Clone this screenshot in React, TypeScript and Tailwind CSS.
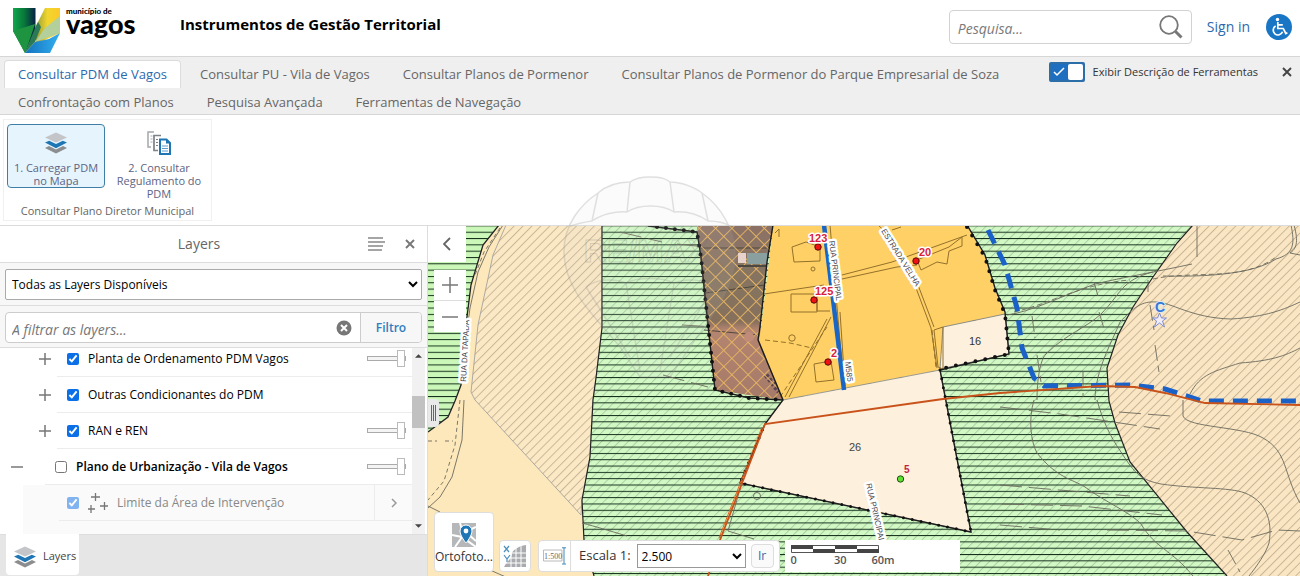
import { useState } from 'react';
import type { ReactNode } from 'react';

const tabs = [
  'Consultar PDM de Vagos',
  'Consultar PU - Vila de Vagos',
  'Consultar Planos de Pormenor',
  'Consultar Planos de Pormenor do Parque Empresarial de Soza',
  'Confrontação com Planos',
  'Pesquisa Avançada',
  'Ferramentas de Navegação',
];

const groups = [
  { label: 'Planta de Ordenamento PDM Vagos', slider: true },
  { label: 'Outras Condicionantes do PDM', slider: false },
  { label: 'RAN e REN', slider: true },
];

const StackIcon = ({ className }: { className: string }) => (
  <svg viewBox="0 0 24 22" className={className} aria-hidden="true">
    <path d="M1 16 5 14l7 3.4L19 14l4 2-11 5.6z" fill="#8b8d8f" />
    <path d="M1 10.600 5.200 8.800 12 12l6.800-3.200 4.200 1.800-11 5.600z" fill="#1f76b4" />
    <path d="M12 .4 23 5.400l-11 5-11-5z" fill="#c3c5c8" />
  </svg>
);

const DocsIcon = () => (
  <svg viewBox="0 0 24 24" className="h-6 w-6" aria-hidden="true" fill="none">
    <path d="M7 1H1v15h3" stroke="#a4a8ac" strokeWidth="1.500" />
    <path d="M3.500 5h2M3.500 8h2M3.500 11h2" stroke="#a4a8ac" strokeWidth="1" />
    <path d="M14 4.500H7v15h4" stroke="#7d8286" strokeWidth="1.700" />
    <path d="M9 8.500h2M9 11.500h2M9 14.500h2" stroke="#7d8286" strokeWidth="1" />
    <path d="M13 8.500h6.500l3.500 3.500v11H13z" fill="#fff" stroke="#1f76b4" strokeWidth="2" />
    <path d="M19 8v4.500h4.500z" fill="#1f76b4" />
    <path d="M15 15h6M15 17.500h6M15 20h6" stroke="#5b9fd0" strokeWidth="1.200" />
  </svg>
);

const Cross = ({ className }: { className: string }) => (
  <svg viewBox="0 0 10 10" className={className} aria-hidden="true">
    <path d="M1 1l8 8M9 1L1 9" stroke="currentColor" strokeWidth="1.900" />
  </svg>
);

const Header = () => (
  <header className="flex h-14 items-start bg-white">
    <a href="#inicio" className="flex w-[168px] gap-[6px] pt-[7px] pl-3" aria-label="Município de Vagos">
      <svg viewBox="0 0 48 46" className="h-[46px] w-12" aria-hidden="true">
        <defs>
          <linearGradient id="lg" x1="0" x2="1" y1="0" y2="0">
            <stop offset="0" stopColor="#12a84b" />
            <stop offset=".5" stopColor="#08773a" />
            <stop offset="1" stopColor="#082144" />
          </linearGradient>
          <linearGradient id="ly" x1="0" x2="1" y1="0" y2="0">
            <stop offset="0" stopColor="#8f9a3c" />
            <stop offset=".5" stopColor="#f2d62f" />
            <stop offset="1" stopColor="#fbc928" />
          </linearGradient>
          <linearGradient id="lb" x1="0" x2="1" y1="0" y2="0">
            <stop offset="0" stopColor="#1173bd" />
            <stop offset="1" stopColor="#35aef0" />
          </linearGradient>
        </defs>
        <path d="M1 1h22.500v22L13 46 1 24z" fill="url(#lg)" />
        <path d="M1 24 23 17 13 46z" fill="#1f9440" />
        <path d="M33 1h15v25L24 37l-1-16z" fill="url(#ly)" />
        <path d="M48 9v17l-25 9 10-14z" fill="#b3cf9c" />
        <path d="M48 26 38 46H13l10-11 14-3z" fill="url(#lb)" />
        <path d="M23.500 20 13 46l10-11 6-15-3-5z" fill="#2b7a55" />
      </svg>
      <span className="flex flex-col font-['Lato',sans-serif] text-black">
        <span className="text-[8px] leading-[8px] font-black">município de</span>
        <span className="text-[27px] leading-[17px] font-black">vagos</span>
      </span>
    </a>
    <h1 className="pt-3 pl-3 text-[15px] leading-6 font-bold text-black">Instrumentos de Gestão Territorial</h1>
    <div className="ml-auto flex items-center pt-[10px] pr-2">
      <div className="flex h-[34px] w-[243px] items-center rounded-sm border border-[#d2d2d2] px-2">
        <input
          type="text"
          aria-label="Pesquisa"
          placeholder="Pesquisa..."
          className="min-w-0 flex-1 bg-transparent pt-1 text-sm italic outline-none placeholder:text-[#7a7a7a]"
        />
        <button type="button" aria-label="Pesquisar">
          <svg viewBox="0 0 24 24" className="h-6 w-6" fill="none" aria-hidden="true">
            <circle cx="10" cy="10" r="8.800" stroke="#777" strokeWidth="1.800" />
            <path d="m16.500 16.500 6 6" stroke="#777" strokeWidth="3" />
          </svg>
        </button>
      </div>
      <a href="#signin" className="ml-[15px] text-sm text-[#2c69ad]">
        Sign in
      </a>
      <button type="button" aria-label="Acessibilidade" className="ml-4">
        <svg viewBox="0 0 26 26" className="h-[26px] w-[26px]" fill="none" aria-hidden="true">
          <circle cx="13" cy="13" r="13" fill="#1976c5" />
          <circle cx="11.500" cy="5.500" r="1.700" fill="#fff" />
          <path d="M11.800 8v6.500h5.500l2.500 5 1.600-.8M12 10.800h4.800" stroke="#fff" strokeWidth="1.700" />
          <path d="M9.600 12a4.800 4.800 0 1 0 6.900 5.800" stroke="#fff" strokeWidth="1.700" />
        </svg>
      </button>
    </div>
  </header>
);

const TabBar = () => {
  const [active, setActive] = useState(0);
  return (
    <div className="flex h-[59px] items-start border-y border-[#d6d6d6] bg-[#efefef] pt-[3px]">
      <nav className="flex max-w-[1030px] flex-wrap pl-1">
        {tabs.map((tab, i) => (
          <button
            key={tab}
            type="button"
            onClick={() => setActive(i)}
            className={
              i === active
                ? 'mr-[5px] h-7 rounded-t-sm border border-b-0 border-[#dcdcdc] bg-white px-[13px] text-[13px] text-[#2c69ad]'
                : 'mr-[5px] h-7 border border-b-0 border-transparent px-[13px] text-[13px] text-[#666]'
            }
          >
            {tab}
          </button>
        ))}
      </nav>
      <label className="mt-[2px] ml-auto flex items-center text-[11px] text-[#333]">
        <input type="checkbox" defaultChecked className="peer sr-only" />
        <span className="mr-2 flex h-5 w-9 items-center justify-between rounded-xs border-2 border-[#2c6ea8] bg-[#1e6fbf]">
          <svg viewBox="0 0 12 10" className="ml-[2px] h-[10px] w-3" fill="none" aria-hidden="true">
            <path d="m1 5 3 3 7-7" stroke="#fff" strokeWidth="1.500" />
          </svg>
          <span className="h-4 w-[15px] rounded-xs bg-white" />
        </span>
        Exibir Descrição de Ferramentas
      </label>
      <button type="button" aria-label="Fechar" className="mt-[7px] mr-2 ml-6 text-[#444]">
        <Cross className="h-[10px] w-[10px]" />
      </button>
    </div>
  );
};

const Toolbar = () => (
  <div className="h-[111px] border-b border-[#dcdcdc] bg-white px-[3px] pt-1">
    <section className="flex h-[102px] w-[209px] flex-col border border-[#f0f0f0] text-[11px] leading-[13px] text-[#5c6484]">
      <div className="flex gap-2 pt-1 pl-[3px]">
        <button
          type="button"
          className="flex h-16 w-[98px] flex-col items-center rounded-sm border border-[#3f7fa5] bg-[#e6f4fd] pt-[6px]"
        >
          <StackIcon className="mb-[6px] h-6 w-6" />
          <span>1. Carregar PDM</span>
          <span>no Mapa</span>
        </button>
        <button type="button" className="flex w-[92px] flex-col items-center pt-[7px]">
          <span className="mb-[6px]">
            <DocsIcon />
          </span>
          <span>2. Consultar</span>
          <span>Regulamento do</span>
          <span>PDM</span>
        </button>
      </div>
      <h2 className="mt-1 text-center text-[#666]">Consultar Plano Diretor Municipal</h2>
    </section>
  </div>
);

const Opacity = ({ label }: { label: string }) => (
  <input
    type="range"
    defaultValue={100}
    aria-label={`Transparência ${label}`}
    className="mr-[6px] ml-auto w-[39px] appearance-none bg-transparent [&::-webkit-slider-runnable-track]:h-[5px] [&::-webkit-slider-runnable-track]:border [&::-webkit-slider-runnable-track]:border-[#aaa] [&::-webkit-slider-runnable-track]:bg-[#f4f4f4] [&::-webkit-slider-thumb]:-mt-[7px] [&::-webkit-slider-thumb]:h-[17px] [&::-webkit-slider-thumb]:w-2 [&::-webkit-slider-thumb]:appearance-none [&::-webkit-slider-thumb]:border [&::-webkit-slider-thumb]:border-[#bbb] [&::-webkit-slider-thumb]:bg-white"
  />
);

const Expander = ({ open }: { open: boolean }) => (
  <svg viewBox="0 0 12 12" className="h-3 w-3" aria-hidden="true">
    <path d={open ? 'M0 6h12' : 'M0 6h12M6 0v12'} stroke="#777" strokeWidth="1.500" />
  </svg>
);

const LayerList = () => (
  <div className="flex min-h-0 flex-1 bg-white">
    <ul className="min-w-0 flex-1 overflow-hidden text-xs text-black">
      {groups.map((g, i) => (
        <li key={g.label} className={i === 0 ? '-mt-[7px] flex h-9' : 'flex h-9'}>
          <button type="button" aria-label={`Expandir ${g.label}`} className="flex w-[57px] items-center justify-end pr-[6px]">
            <Expander open={false} />
          </button>
          <div className="flex flex-1 items-center border-b border-[#ececec]">
            <label className="flex items-center gap-[9px] pl-[10px]">
              <input type="checkbox" defaultChecked className="h-3 w-3 accent-[#0b6fe8]" />
              {g.label}
            </label>
            {g.slider && <Opacity label={g.label} />}
          </div>
        </li>
      ))}
      <li className="flex h-9">
        <button type="button" aria-label="Recolher" className="flex w-[45px] items-center pl-[11px]">
          <Expander open />
        </button>
        <div className="flex flex-1 items-center border-b border-[#ececec]">
          <label className="flex items-center gap-[9px] pl-[10px] font-semibold">
            <input type="checkbox" className="h-3 w-3" />
            Plano de Urbanização - Vila de Vagos
          </label>
          <Opacity label="Plano de Urbanização" />
        </div>
      </li>
      <li className="ml-[23px] flex h-9 bg-[#fafafa] pl-9 text-[#888]">
        <div className="flex flex-1 items-center border-b border-[#ececec]">
          <label className="flex items-center gap-[9px] pl-2">
            <input type="checkbox" defaultChecked className="h-3 w-3 opacity-50 accent-[#0b6fe8]" />
            <svg viewBox="0 0 20 20" className="h-5 w-5" fill="none" stroke="#777" strokeWidth="1.300" aria-hidden="true">
              <path d="M3 4h9M7.500 0v8M12 13h8M16.500 9v8M0 16h7M3 12v8" />
            </svg>
            Limite da Área de Intervenção
          </label>
        </div>
        <button type="button" aria-label="Detalhes" className="flex w-[38px] items-center justify-center border-b border-l border-[#ececec]">
          <svg viewBox="0 0 6 10" className="h-[10px] w-[6px]" fill="none" aria-hidden="true">
            <path d="m1 1 4 4-4 4" stroke="#999" strokeWidth="1.500" />
          </svg>
        </button>
      </li>
      <li className="ml-[23px] flex h-9 bg-[#fafafa]" />
    </ul>
    <div className="mr-[2px] flex w-[13px] flex-col items-center justify-between bg-[#f1f1f1] py-[6px]" aria-hidden="true">
      <svg viewBox="0 0 8 4" className="h-1 w-[7px]">
        <path d="M0 4h8L4 0z" fill="#444" />
      </svg>
      <span className="-mt-[58px] h-8 w-full bg-[#c1c1c1]" />
      <svg viewBox="0 0 8 4" className="h-1 w-[7px]">
        <path d="M0 0h8L4 4z" fill="#444" />
      </svg>
    </div>
  </div>
);

const LayerPanel = () => (
  <aside className="flex h-full w-[428px] shrink-0 flex-col border-r border-[#ddd] bg-[#f7f7f7]">
    <div className="flex h-9 items-center bg-white">
      <h2 className="flex-1 pl-[30px] text-center text-sm text-[#666]">
        <span className="pr-[60px]">Layers</span>
      </h2>
      <button type="button" aria-label="Menu" className="mr-5 -ml-[60px] text-[#888]">
        <svg viewBox="0 0 17 14" className="h-[14px] w-[17px]" aria-hidden="true">
          <path d="M0 1h15M0 5h17M0 9h15M0 13h14" stroke="currentColor" strokeWidth="1.500" />
        </svg>
      </button>
      <button type="button" aria-label="Fechar painel" className="mr-3 text-[#777]">
        <Cross className="h-[10px] w-[10px]" />
      </button>
    </div>
    <div className="border-y border-[#ddd] px-[5px] pt-[6px] pb-[5px]">
      <select
        aria-label="Layers"
        className="block h-[31px] w-full rounded-xs border border-[#aaa] bg-white px-[2px] text-xs text-black"
      >
        <option>Todas as Layers Disponíveis</option>
      </select>
    </div>
    <div className="border-b border-[#ddd] px-[5px] pt-[6px] pb-1">
      <div className="flex h-[31px] overflow-hidden rounded-sm border border-[#ccc] bg-white">
        <input
          type="text"
          aria-label="Filtrar layers"
          placeholder="A filtrar as layers..."
          className="min-w-0 flex-1 px-[6px] pt-1 text-sm italic outline-none placeholder:text-[#777]"
        />
        <button type="button" aria-label="Limpar" className="mr-2">
          <svg viewBox="0 0 16 16" className="h-4 w-4" aria-hidden="true">
            <circle cx="8" cy="8" r="7.500" fill="#777" />
            <path d="m5 5 6 6m0-6-6 6" stroke="#fff" strokeWidth="2" />
          </svg>
        </button>
        <button type="button" className="w-[61px] border-l border-[#ccc] bg-[#f7f7f7] text-xs font-semibold text-[#2f7dc0]">
          Filtro
        </button>
      </div>
    </div>
    <LayerList />
    <div className="flex h-[42px] border-t border-[#ddd] bg-[#e6e6e6] pl-[6px]">
      <button type="button" className="-mt-px mb-[1px] flex w-[73px] items-center gap-[6px] rounded-b-sm bg-white pt-1 pl-[7px] text-[11px] text-[#444]">
        <StackIcon className="h-[22px] w-6" />
        Layers
      </button>
    </div>
  </aside>
);

const rightEdge = '1193,225 1177,243 1153,277 1133,307 1118,335 1107,368 1109,401 1115,423 1130,462 1187,532 1227,576';
const centerEdge = '602,225 602,328 596,378 593,400 590,457 582,500 584,540 594,576';
const greenZone = `${centerEdge} 1227,576 1187,532 1130,462 1115,423 1109,401 1107,368 1118,335 1133,307 1153,277 1177,243 1193,225`;

const Pin = ({ x, y }: { x: number; y: number }) => (
  <circle cx={x} cy={y} r="3.200" fill="#f01313" stroke="#5b0a0a" />
);

const Street = ({ x, y, angle, children }: { x: number; y: number; angle: number; children: ReactNode }) => (
  <text
    transform={`translate(${x} ${y}) rotate(${angle})`}
    fontSize="8"
    fill="#44444c"
    stroke="#fff"
    strokeWidth="5"
    strokeLinejoin="round"
    paintOrder="stroke"
  >
    {children}
  </text>
);

const MapCanvas = () => (
  <svg
    viewBox="428 226 872 350"
    preserveAspectRatio="xMinYMin slice"
    className="absolute inset-0 h-full w-full font-['Liberation_Sans',Arial,sans-serif]"
    role="img"
    aria-label="Mapa"
  >
    <defs>
      <pattern id="rows" width="20" height="6.320" y="4.200" patternUnits="userSpaceOnUse">
        <path d="M0 .5h20" stroke="#14301c" strokeWidth="1" />
      </pattern>
      <pattern id="hatch" width="6.300" height="6.300" patternUnits="userSpaceOnUse" patternTransform="rotate(45)">
        <path d="M.5 0v7" stroke="#b5a285" strokeWidth=".7" />
      </pattern>
      <pattern id="faint" width="6.300" height="6.300" patternUnits="userSpaceOnUse" patternTransform="rotate(45)">
        <path d="M.5 0v7" stroke="#9bbf9b" strokeWidth=".7" />
      </pattern>
      <pattern id="net" width="11.500" height="11.500" patternUnits="userSpaceOnUse" patternTransform="rotate(45)">
        <path d="M0 0h12M0 0v12" stroke="#e6b462" strokeWidth="1.800" />
      </pattern>
      <linearGradient id="soil" x1="0" x2="0" y1="0" y2="1">
        <stop offset="0" stopColor="#8c7266" />
        <stop offset=".35" stopColor="#85745f" />
        <stop offset=".55" stopColor="#86705c" />
        <stop offset=".6" stopColor="#b48570" />
        <stop offset="1" stopColor="#a57a69" />
      </linearGradient>
    </defs>

    {/* base zones */}
    <path d="M428 225h872v351H428z" fill="#fde8bb" />
    <path d="M428 225h71l-16 20-12 40-5 40-5 60-6 16-7 16-20 15z" fill="#cbf7b9" />
    <path d="M428 225h71l-16 20-12 40-5 40-5 60-6 16-7 16-20 15z" fill="url(#rows)" />
    <path d="M499 225 483 245 471 285 466 325 461 385 455 401 448 417 428 432" fill="none" stroke="#222" strokeWidth="1.300" />
    <path d="M506 225 493 255 478 325 471 392 475 400 581 515 582 500 590 457 593 400 596 378 602 328V225z" fill="#fbe8c4" />
    <path d="M506 225 493 255 478 325 471 392 475 400 581 515 582 500 590 457 593 400 596 378 602 328V225z" fill="url(#hatch)" stroke="#999" strokeWidth=".8" />
    <polygon points={greenZone} fill="#d2f8c4" />
    <polygon points={greenZone} fill="url(#faint)" />
    <polygon points={greenZone} fill="url(#rows)" />
    <polygon points={`${rightEdge} 1300,576 1300,225`} fill="#fae6c3" />
    <polygon points={`${rightEdge} 1300,576 1300,225`} fill="url(#hatch)" />
    <g fill="none" stroke="#222" strokeWidth="1.200">
      <polyline points={centerEdge} />
      <polyline points={rightEdge} />
    </g>

    {/* contour lines and paths */}
    <g fill="none" stroke="#6b6a5e" strokeWidth=".9">
      <path d="M503 225 489 247 478 272 470 308 465 345M464 400 462 440 452 477 440 497 428 508" />
      <path d="M500 228 484 252 475 275M460 400 455 445 444 481 428 500M428 441h9m8 0h8" strokeDasharray="4 3" />
      <path d="M428 506l12 6M490 570l18 8" />
      <path d="M1007 315C1030 312 1060 297 1095 284C1120 278 1160 271 1192 264M1197 225v32M1163 276c45 1 90-2 113-17 18-5 19-15 15-34M1294 225c5 18 2 24-4 28l10 2" />
      <path d="M1014 312C1050 304 1080 284 1130 280M1153 279c40-9 90 3 123-22" strokeDasharray="5 3" />
      <path d="M1037 400c0-20 3-40 9-46 20-20 40-26 55-40 20-20 20-34 52-42M1095 400c0-30 18-60 25-78 14-15 22-21 36-20 15 0 35 16 75 17 35-2 54-10 69-17M1190 394c10-20 25-23 50-31 30-2 45-7 60-15M1183 400v16c4 12 60 10 80 22 25 14 20 35 37 65" />
      <path d="M1034 400c-6 20-3 42 3 53 20 25 35 26 48 34 20 15 45 25 56 37 15 25 30 25 52 52M1097 400c5 18 12 35 24 52 14 22 20 28 40 32 35 5 68 3 84 9 20 8 28 26 24 50-3 10-12 23-20 33" />
      <path d="M1150 305l4 25M1155 345l4 27M1148 280v12M1094 282l4 14M1099 312l6 20M1032 316l3 22M1037 355l4 27M1083 372v25M1228 550l12 22" strokeDasharray="16 5" />
      <path d="M620 232l42 10M677 244l48 5M663 375l45 12M682 325l34 2M1000 407l60 7 100 15M1000 485l130 11M1002 504l80 2 80 9M1000 525l60 5M1107 530l80 1 55 9 35-10 23 1M1119 412l52 4" strokeDasharray="22 7" />
      <path d="M582 523c15 4 25 7 45 13M740 489l-12 42 26 8" />
      <circle cx="757" cy="496" r="3.500" />
    </g>

    {/* aerial photo */}
    <path d="M697 225h76l-6 37-7 65 23 73-68-10-9-74z" fill="url(#soil)" />
    <path d="M700 248h70M704 330l54 5M705 293l60-8" stroke="#51483e" fill="none" />
    <path d="M766 375l14 18" stroke="#5a4551" strokeWidth="5" strokeDasharray="3 2" />
    <path d="M697 225h76l-6 37-7 65 23 73-68-10-9-74z" fill="url(#net)" />
    <path d="M738 253h8v10h-8z" fill="#e7d3cc" />
    <path d="M747 253h20v11h-20z" fill="#8aa0a0" />
    <path d="M738 265h28v2h-28z" fill="#4c4842" />
    <circle cx="749" cy="337" r="5" fill="#c08c79" />

    {/* urban zone and plots */}
    <path d="M773 225h194l18 32 10 33 10 24-62 13-3 43-157 30-24-60 2-12 8-66z" fill="#fed065" />
    <path d="M943 327l62-13 4 40-69 15z" fill="#fdf0dc" stroke="#777" strokeWidth=".8" />
    <path d="M783 400l157-30 31 162-231-49 25-59z" fill="#fdf0dc" stroke="#888" strokeWidth=".8" />
    <g fill="none" stroke="#94712c" strokeWidth="1">
      <path d="M764 294l60-9M842 275l50-13 75-27M842 279l55-12 20-2M830 225l14 163M840 312l5 74" />
      <path d="M792 247l14-5 14 5v14l-26 1zM791 294h26v18h-26zM817 300v11h13M814 364l17-3 3 19-18 2zM917 260l32-13 13-10v9l-13 5-2 13-10-2-16 8zM934 330l9-3v42l-5-2z" />
      <path d="M913 280l18 48 6 40M918 285l16 42M785 397l42-78M789 397l42-80M878 225l16 15M892 230l9-3M775 233l4-4v8" />
      <path d="M765 340l25 3 22 5M780 397l47-70M932 330l4 38" strokeDasharray="5 3" />
      <circle cx="813" cy="269" r="2" />
      <circle cx="792" cy="338" r="3.200" />
    </g>
    <g fill="none" stroke="#1d1d1d" strokeWidth="1.400">
      <path d="M648 226l49 6 4 25 6 58 8 75 34 8 34 2M773 225l-6 37-7 65-2 13 25 60-18 24-25 59 231 49-31-162 69-16-4-42-10-24-10-33-18-30" />
    </g>
    <g fill="none" stroke="#111" strokeLinecap="round" strokeWidth="4">
      <path d="M657 227l40 5 4 25 6 58 8 75 34 8 34 2" strokeDasharray="0 9" />
      <path d="M967 227l18 30 10 33 10 24 4 40-69 15" strokeDasharray="0 10" />
      <path d="M940 370l31 162-231-49 25-59" strokeWidth="3" strokeDasharray="0 9" />
    </g>

    {/* roads */}
    <path d="M824 225l20 165" stroke="#1b66c4" strokeWidth="4.500" />
    <path d="M988 230l17 35 12 43 5 40 12 30 10 8 86-1 35 4 37 12h98" fill="none" stroke="#1b62c8" strokeWidth="5" strokeDasharray="15 9" />
    <path d="M708 576l12-36 45-116 178-25 57-6 100-7 35 1 30 6 40 10 95 2" fill="none" stroke="#c9521a" strokeWidth="1.800" />
    <path d="M719 538l43-111" fill="none" stroke="#e2651f" strokeWidth="1" />

    <Street x={829} y={241} angle={83}>RUA PRINCIPAL</Street>
    <Street x={881} y={231} angle={58}>ESTRADA VELHA</Street>
    <Street x={845} y={362} angle={83}>M585</Street>
    <Street x={466} y={382} angle={-87}>RUA DA TAPADA</Street>
    <Street x={866} y={484} angle={77}>RUA PRINCIPAL</Street>

    <Pin x={818} y={247} />
    <Pin x={814} y={300} />
    <Pin x={828} y={362} />
    <Pin x={916} y={261} />
    <g fontSize="11" fontWeight="bold" fill="#d81e3c" stroke="#fff" strokeWidth="3" strokeLinejoin="round" paintOrder="stroke">
      <text x="809" y="242">123</text>
      <text x="815" y="295">125</text>
      <text x="831" y="357">2</text>
      <text x="919" y="256">20</text>
    </g>
    <circle cx="900.500" cy="479" r="3.200" fill="#5fe032" stroke="#234d14" />
    <text x="904" y="473" fontSize="10" fontWeight="bold" fill="#c21f44">5</text>
    <text x="849" y="451" fontSize="11" fill="#444">26</text>
    <text x="969" y="345" fontSize="11" fill="#333">16</text>
    <text x="1155" y="312" fontSize="14" fontWeight="bold" fill="#3278d8" stroke="#e1e8ef" strokeWidth="2" paintOrder="stroke">C</text>
    <path d="m1159.500 313 2 5h5l-4 3 2 6-5-4-5 4 2-6-4-3h5z" fill="#f2ecf4" stroke="#7f8cd0" />
  </svg>
);

/* faded hot-air balloon over the toolbar and the map */
const Balloon = () => (
  <svg
    viewBox="0 0 180 210"
    className="pointer-events-none absolute top-[-51px] left-[132px] h-[210px] w-[180px] opacity-30"
    aria-hidden="true"
  >
    <path
      d="M90 2c12 0 16 2 20 5 12 0 26 6 32 11 20 14 33 38 33 62 0 34-27 66-45 92l-20 30H80l-20-30C36 142 4 116 4 76c0-26 16-46 34-58C46 11 58 7 70 7c4-3 10-5 20-5z"
      fill="#d9d9d9"
      fillOpacity=".3"
      stroke="#999"
      strokeWidth="1.500"
    />
    <g fill="none" stroke="#999" strokeWidth="1.500">
      <path d="M70 7 67 37M110 7l4 30M38 18l-6 28M142 18l6 28M8 52c10-4 17-5 24-6 10-7 24-10 35-9 12-8 35-8 47 0 14-1 25 3 34 9 8 0 18 2 24 6M26 112l44 70M66 108l14 88M114 108l-14 88M154 112l-44 70M26 112c10-8 28-9 40-4 12-6 36-6 48 0 12-5 30-4 40 4" />
    </g>
    <text x="86" y="87" textAnchor="middle" fontSize="32" fontWeight="bold" fill="none" stroke="#888" className="font-['Liberation_Sans',Arial,sans-serif]">
      RE/MAX
    </text>
  </svg>
);

const MapControls = () => (
  <>
    <button type="button" aria-label="Recolher painel" className="absolute top-0 left-0 flex h-9 w-[38px] items-center justify-center bg-white">
      <svg viewBox="0 0 8 14" className="h-[14px] w-2" fill="none" aria-hidden="true">
        <path d="M7 1 1 7l6 6" stroke="#666" strokeWidth="1.800" />
      </svg>
    </button>
    <div className="absolute top-11 left-[6px] flex w-8 flex-col divide-y divide-[#ddd] bg-white">
      <button type="button" aria-label="Aproximar" className="flex h-[31px] items-center justify-center">
        <svg viewBox="0 0 16 16" className="h-4 w-4" aria-hidden="true">
          <path d="M0 8h16M8 0v16" stroke="#777" strokeWidth="1.500" />
        </svg>
      </button>
      <button type="button" aria-label="Afastar" className="flex h-[31px] items-center justify-center">
        <svg viewBox="0 0 16 16" className="h-4 w-4" aria-hidden="true">
          <path d="M0 8h16" stroke="#777" strokeWidth="1.500" />
        </svg>
      </button>
    </div>
    <div className="absolute top-[173px] left-0 flex h-7 w-[11px] items-center justify-center gap-px rounded-r-sm bg-[#e9e9e9]">
      <span className="h-4 w-px bg-[#666]" />
      <span className="h-4 w-px bg-[#666]" />
      <span className="h-4 w-px bg-[#666]" />
    </div>

    <div className="absolute bottom-1 left-[6px] flex items-end gap-[5px] text-xs text-[#333]">
      <button type="button" className="flex h-[60px] w-[60px] flex-col items-center justify-end rounded-sm border border-[#ddd] bg-white pb-[6px]">
        <svg viewBox="0 0 24 24" className="mb-[2px] h-6 w-6" aria-hidden="true">
          <path d="M0 0h24v24H0z" fill="#b5b7b9" />
          <path d="M0 12l10 2-7 10M10 14l14 10M8 0l3 10L24 4M17 12l7 6" fill="none" stroke="#fff" strokeWidth="2" />
          <path d="M14 2a6 6 0 0 1 6 6c0 5-6 12-6 12S8 13 8 8a6 6 0 0 1 6-6z" fill="#1f76b4" stroke="#fff" />
          <circle cx="14" cy="8" r="2.400" fill="#fff" />
        </svg>
        Ortofoto...
      </button>
      <button type="button" aria-label="Coordenadas" className="flex h-8 w-8 items-center justify-center rounded-sm border border-[#ddd] bg-white">
        <svg viewBox="0 0 24 24" className="h-6 w-6" fill="none" aria-hidden="true">
          <path d="M1 23h22V1C16 2 11 5 9 9c0 6-5 8-8 14z" fill="#a9abae" />
          <path d="M9 9h14M6 14h17M3 19h20M13 4v20M18 2v22M8 10v14" stroke="#fff" />
          <path d="m1 2 5 6M6 2 1 8M1 11l3 4 3-4M4 15v3" stroke="#4d8fbd" strokeWidth="1.200" />
        </svg>
      </button>
      <div className="ml-[2px] flex h-8 items-center rounded-sm border border-[#ddd] bg-white pr-[5px]">
        <button type="button" aria-label="Escala" className="flex h-full w-8 items-center justify-center border-r border-[#ddd]">
          <svg viewBox="0 0 24 18" className="h-[18px] w-6" fill="none" aria-hidden="true">
            <path d="M.5 3h18.500v11H.5z" stroke="#aaa" strokeWidth=".8" />
            <text x="1" y="12" fontSize="8" fill="#666" className="font-['Liberation_Serif',serif]">1:500</text>
            <path d="M19 .8h4M21 .8v16M19 17h4" stroke="#3f88b5" />
          </svg>
        </button>
        <label htmlFor="escala" className="pr-[6px] pl-2 text-[13px]">
          Escala 1:
        </label>
        <select id="escala" className="h-6 w-[109px] border border-[#999] bg-white text-xs text-black">
          <option>2.500</option>
        </select>
        <button type="button" className="ml-[5px] h-6 w-[23px] rounded-sm border border-[#ddd] bg-[#fafafa] text-[#2c69ad]">
          Ir
        </button>
      </div>
      <div className="flex h-8 w-[175px] flex-col bg-white pt-[5px] pl-[6px] text-[11px] leading-[14px] font-semibold text-[#555]">
        <svg viewBox="0 0 88 8" className="h-2 w-[88px]" aria-hidden="true">
          <path d="M.5.5h87v7H.5z" fill="#fff" stroke="#555" />
          <path d="M0 0h22v4H0zM44 0h22v4H44zM22 4h22v4H22zM66 4h22v4H66z" fill="#444" />
        </svg>
        <div className="flex w-[104px] justify-between">
          <span>0</span>
          <span className="pl-3">30</span>
          <span>60m</span>
        </div>
      </div>
    </div>
  </>
);

export default function App() {
  return (
    <div className="flex h-screen flex-col overflow-hidden bg-white font-['Open_Sans','Noto_Sans',sans-serif]">
      <Header />
      <TabBar />
      <Toolbar />
      <main className="flex min-h-0 flex-1">
        <LayerPanel />
        <div className="relative min-w-0 flex-1">
          <MapCanvas />
          <Balloon />
          <MapControls />
        </div>
      </main>
    </div>
  );
}
